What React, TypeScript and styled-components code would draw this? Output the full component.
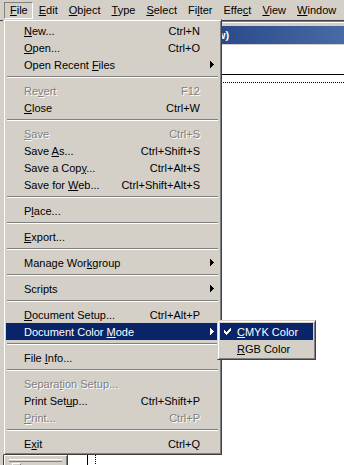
import * as React from 'react';
import styled, { createGlobalStyle } from 'styled-components';

type Entry =
  | { sep: true }
  | {
      label: string;
      shortcut?: string;
      disabled?: boolean;
      submenu?: boolean;
      active?: boolean;
    };

const barItems = ['&File', '&Edit', '&Object', '&Type', '&Select', 'Fi&lter', 'Effe&ct', '&View', '&Window'];

const fileMenu: Entry[] = [
  { label: '&New...', shortcut: 'Ctrl+N' },
  { label: '&Open...', shortcut: 'Ctrl+O' },
  { label: 'Open Recent &Files', submenu: true },
  { sep: true },
  { label: 'Re&vert', shortcut: 'F12', disabled: true },
  { label: '&Close', shortcut: 'Ctrl+W' },
  { sep: true },
  { label: '&Save', shortcut: 'Ctrl+S', disabled: true },
  { label: 'Save &As...', shortcut: 'Ctrl+Shift+S' },
  { label: 'Save a Cop&y...', shortcut: 'Ctrl+Alt+S' },
  { label: 'Save for &Web...', shortcut: 'Ctrl+Shift+Alt+S' },
  { sep: true },
  { label: 'P&lace...' },
  { sep: true },
  { label: '&Export...' },
  { sep: true },
  { label: 'Manage Wor&kgroup', submenu: true },
  { sep: true },
  { label: 'Scripts', submenu: true },
  { sep: true },
  { label: '&Document Setup...', shortcut: 'Ctrl+Alt+P' },
  { label: 'Document Color &Mode', submenu: true, active: true },
  { sep: true },
  { label: 'File &Info...' },
  { sep: true },
  { label: 'Separa&tion Setup...', disabled: true },
  { label: 'Print Set&up...', shortcut: 'Ctrl+Shift+P' },
  { label: '&Print...', shortcut: 'Ctrl+P', disabled: true },
  { sep: true },
  { label: 'E&xit', shortcut: 'Ctrl+Q' },
];

const colorModes = [
  { label: '&CMYK Color', checked: true },
  { label: '&RGB Color', checked: false },
];

const GlobalStyle = createGlobalStyle`
  html, body {
    margin: 0;
    padding: 0;
    background: #d4d0c8;
  }
  body {
    font-family: "Liberation Sans", Arial, sans-serif;
    font-size: 11px;
    color: #000;
  }
`;

const Root = styled.div`
  position: relative;
  width: 344px;
  height: 465px;
  overflow: hidden;
  background: #d4d0c8;
  display: flex;
  flex-direction: column;
`;

const MenuBar = styled.div`
  display: flex;
  height: 20px;
  box-sizing: border-box;
  padding: 2px 0 0 4px;
`;

const BarItem = styled.div<{ $open?: boolean }>`
  height: 17px;
  box-sizing: border-box;
  line-height: 15px;
  padding: 0 4px 0 5px;
  border: 1px solid transparent;
  white-space: nowrap;
  ${(p) => p.$open && 'border-color: #808080 #fff #fff #808080;'}
`;

const Mn = styled.span`
  text-decoration: underline;
  text-underline-offset: 1px;
`;

const Workspace = styled.div`
  flex: 1;
  display: flex;
  border-top: 1px solid #404040;
  padding-left: 4px;
`;

const DocWindow = styled.div`
  flex: 1;
  display: flex;
  flex-direction: column;
  border-top: 1px solid #808080;
`;

const DocFrame = styled.div`
  border-top: 1px solid #fff;
  padding: 3px 0 1px 4px;
  background: #d4d0c8;
`;

const TitleBar = styled.div`
  height: 18px;
  line-height: 18px;
  padding-left: 38px;
  color: #fff;
  font-weight: bold;
  white-space: nowrap;
  overflow: hidden;
  background: linear-gradient(90deg, #0a246a 0px, #2c4c8b 220px, #486aa6 336px);
`;

const Canvas = styled.div`
  flex: 1;
  background: #fff;
  padding: 29px 0 0 79px;
  border-left: 4px solid #d4d0c8;
`;

const Page = styled.div`
  height: 100%;
  box-sizing: border-box;
  border-top: 1px solid #000;
  border-left: 1px solid #000;
  padding: 7px 0 0 7px;
`;

const Imageable = styled.div`
  height: 100%;
  border-top: 1px dotted #000;
  border-left: 1px dotted #000;
`;

const Popup = styled.div<{ $width: number }>`
  position: absolute;
  width: ${(p) => p.$width}px;
  box-sizing: border-box;
  padding: 2px;
  background: #d4d0c8;
  border: 1px solid;
  border-color: #d4d0c8 #404040 #404040 #d4d0c8;
  box-shadow: inset 1px 1px #fff, inset -1px -1px #808080;
  z-index: 5;
`;

const FileMenu = styled(Popup)`
  top: 19px;
  left: 3px;
`;

const SubMenu = styled(Popup)`
  top: -3px;
  left: calc(100% - 2px);
`;

const Item = styled.div<{ $active?: boolean; $disabled?: boolean; $indent: number }>`
  position: relative;
  display: flex;
  align-items: center;
  height: 17px;
  padding-left: ${(p) => p.$indent}px;
  white-space: nowrap;
  color: ${(p) => (p.$active ? '#fff' : p.$disabled ? '#808080' : '#000')};
  background: ${(p) => (p.$active ? '#0a246a' : 'transparent')};
  ${(p) => p.$disabled && !p.$active && 'text-shadow: 1px 1px 0 #fff;'}
`;

const ItemLabel = styled.span`
  flex: 1;
`;

const Shortcut = styled.span``;

const ArrowSlot = styled.span`
  width: 19px;
  box-sizing: border-box;
  padding-left: 10px;
  display: flex;
  align-items: center;
`;

const CheckSlot = styled.span`
  position: absolute;
  left: 4px;
  top: 5px;
  display: flex;
`;

const Separator = styled.div`
  height: 9px;
  box-sizing: border-box;
  padding: 3px 1px 0;
  &::before {
    content: '';
    display: block;
    border-top: 1px solid #808080;
    border-bottom: 1px solid #fff;
  }
`;

const Toolbox = styled.div`
  position: absolute;
  left: 3px;
  top: 454px;
  width: 65px;
  height: 40px;
  box-sizing: border-box;
  border: 1px solid #404040;
  background: #d4d0c8;
  box-shadow: inset 1px 1px #fff, inset -1px -1px #808080;
  padding: 4px 5px 0;
`;

const Grip = styled.div`
  height: 1px;
  margin-bottom: 1px;
  border-top: 1px solid #fff;
  border-bottom: 1px solid #808080;
`;

const ToolButton = styled.div`
  margin: 1px 0 0 3px;
  width: 7px;
  height: 10px;
  border: 1px solid;
  border-color: #fff #808080 #808080 #fff;
`;

const Label = ({ text }: { text: string }) => {
  const i = text.indexOf('&');
  if (i < 0) return <>{text}</>;
  return (
    <>
      {text.slice(0, i)}
      <Mn>{text[i + 1]}</Mn>
      {text.slice(i + 2)}
    </>
  );
};

const Arrow = ({ color }: { color: string }) => (
  <svg width="4" height="7" viewBox="0 0 4 7" shapeRendering="crispEdges">
    <rect x="0" y="0" width="1" height="7" fill={color} />
    <rect x="1" y="1" width="1" height="5" fill={color} />
    <rect x="2" y="2" width="1" height="3" fill={color} />
    <rect x="3" y="3" width="1" height="1" fill={color} />
  </svg>
);

const checkRows = [
  [6, 0, 1],
  [5, 1, 2],
  [0, 2, 1],
  [4, 2, 3],
  [0, 3, 2],
  [3, 3, 3],
  [0, 4, 5],
  [1, 5, 3],
  [2, 6, 1],
];

const Check = ({ color }: { color: string }) => (
  <svg width="7" height="7" viewBox="0 0 7 7" shapeRendering="crispEdges">
    {checkRows.map(([x, y, w], i) => (
      <rect key={i} x={x} y={y} width={w} height={1} fill={color} />
    ))}
  </svg>
);

const ColorModeMenu = () => (
  <SubMenu $width={99}>
    {colorModes.map((m, i) => (
      <Item key={m.label} $indent={17} $active={i === 0}>
        {m.checked && (
          <CheckSlot>
            <Check color={i === 0 ? '#fff' : '#000'} />
          </CheckSlot>
        )}
        <ItemLabel>
          <Label text={m.label} />
        </ItemLabel>
      </Item>
    ))}
  </SubMenu>
);

const App = () => (
  <Root>
    <GlobalStyle />
    <MenuBar>
      {barItems.map((b, i) => (
        <BarItem key={b} $open={i === 0}>
          <Label text={b} />
        </BarItem>
      ))}
    </MenuBar>
    <Workspace>
      <DocWindow>
        <DocFrame>
          <TitleBar>Untitled-1 @ 100% (CMYK/Preview)</TitleBar>
        </DocFrame>
        <Canvas>
          <Page>
            <Imageable />
          </Page>
        </Canvas>
      </DocWindow>
    </Workspace>

    <Toolbox>
      <Grip />
      <ToolButton />
    </Toolbox>

    <FileMenu $width={219}>
      {fileMenu.map((e, i) => {
        if ('sep' in e) return <Separator key={i} />;
        const fg = e.active ? '#fff' : '#000';
        return (
          <Item key={i} $indent={18} $active={e.active} $disabled={e.disabled}>
            <ItemLabel>
              <Label text={e.label} />
            </ItemLabel>
            {e.shortcut && <Shortcut>{e.shortcut}</Shortcut>}
            <ArrowSlot>{e.submenu && <Arrow color={fg} />}</ArrowSlot>
            {e.active && <ColorModeMenu />}
          </Item>
        );
      })}
    </FileMenu>
  </Root>
);

export default App;
